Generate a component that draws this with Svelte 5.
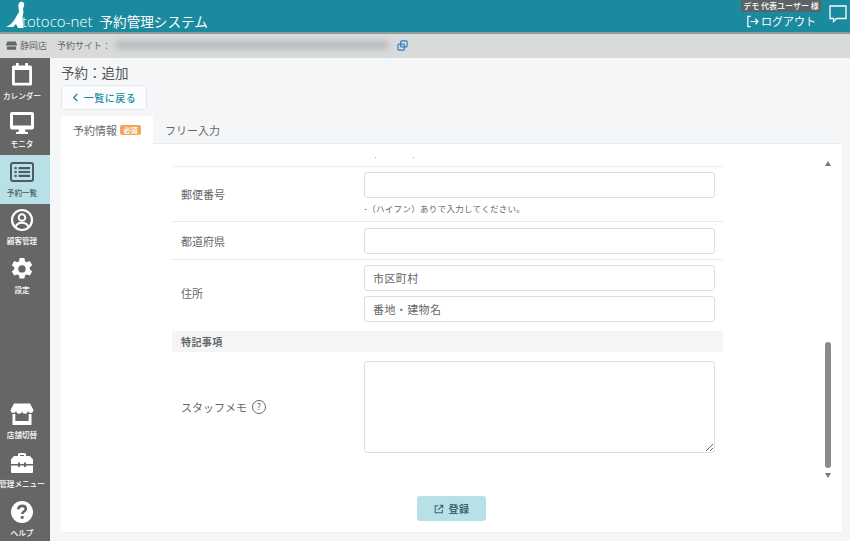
<script lang="ts">
	const navTop = [
		{ id: 'cal', label: 'カレンダー' },
		{ id: 'mon', label: 'モニタ' },
		{ id: 'list', label: '予約一覧', active: true },
		{ id: 'user', label: '顧客管理' },
		{ id: 'gear', label: '設定' }
	];
	const navBottom = [
		{ id: 'shop', label: '店舗切替' },
		{ id: 'tool', label: '管理メニュー' },
		{ id: 'help', label: 'ヘルプ' }
	];
</script>

{#snippet icon(id: string)}
	<svg viewBox="0 0 24 24" width="24" height="24" class="nav-icon">
		{#if id === 'cal'}
			<path d="M3.500 2.500h17a1.500 1.500 0 0 1 1.500 1.500v17a1.500 1.500 0 0 1-1.500 1.500h-17A1.500 1.500 0 0 1 2 21V4a1.500 1.500 0 0 1 1.500-1.500z M4.800 7v12.800h14.400V7z" fill="currentColor" fill-rule="evenodd" />
			<path d="M6 0h2.800v5H6z M15.200 0H18v5h-2.800z" fill="currentColor" />
		{:else if id === 'mon'}
			<path d="M0 3a2 2 0 0 1 2-2h20a2 2 0 0 1 2 2v13.500a2 2 0 0 1-2 2h-7l.6 2.500h2.400v2H6v-2h2.400l.6-2.500H2a2 2 0 0 1-2-2z M3 4v10.500h18V4z" fill="currentColor" fill-rule="evenodd" />
		{:else if id === 'list'}
			<rect x="1" y="3" width="22" height="18" rx="2" fill="none" stroke="currentColor" stroke-width="2" />
			<path d="M4.500 7h2.200v2.200H4.500z M4.500 10.900h2.200v2.200H4.500z M4.500 14.800h2.200V17H4.500z M8.500 7H20v2.200H8.500z M8.500 10.900H20v2.200H8.500z M8.500 14.800H20V17H8.500z" fill="currentColor" />
		{:else if id === 'user'}
			<circle cx="12" cy="12" r="10" fill="none" stroke="currentColor" stroke-width="2.200" />
			<circle cx="12" cy="9.500" r="3.300" fill="none" stroke="currentColor" stroke-width="2" />
			<path d="M5.500 19c1-3 3.500-4.300 6.500-4.300s5.500 1.300 6.500 4.300" fill="none" stroke="currentColor" stroke-width="2" />
		{:else if id === 'gear'}
			<path fill-rule="evenodd" fill="currentColor" d="M9.600 1h4.800l.6 3.200 1.700 1 3.100-1.100 2.400 4.100-2.500 2.100v2l2.500 2.100-2.400 4.100-3.100-1.100-1.700 1-.6 3.200H9.600L9 18.400l-1.700-1-3.100 1.100-2.400-4.100 2.500-2.100v-2L1.800 8.200l2.400-4.100 3.100 1.100 1.700-1z M12 8.200a3.700 3.700 0 1 0 0 7.400 3.700 3.700 0 0 0 0-7.400z" />
		{:else if id === 'shop'}
			<path fill="currentColor" d="M4 1.500h16l3.500 6.500a2.900 2.900 0 0 1-5.700.8 2.900 2.900 0 0 1-5.800 0 2.900 2.900 0 0 1-5.800 0A2.900 2.900 0 0 1 .5 8z" />
			<path fill="currentColor" fill-rule="evenodd" d="M2.500 12h2.800v7h13.400v-7h2.800v11H2.500z" />
		{:else if id === 'tool'}
			<path fill="currentColor" fill-rule="evenodd" d="M8 5V3.500A1.500 1.500 0 0 1 9.500 2h5A1.500 1.500 0 0 1 16 3.500V5h3.500a1.500 1.500 0 0 1 1 .5L23 8.500V13H16v-1.500h-2V13h-4v-1.500H8V13H1V8.500l2.500-3a1.500 1.500 0 0 1 1-.5z M10 4v1h4V4z" />
			<path fill="currentColor" d="M1 14.500h7V16h2v-1.500h4V16h2v-1.500h7V21a1 1 0 0 1-1 1H2a1 1 0 0 1-1-1z" />
		{:else if id === 'help'}
			<circle cx="12" cy="12" r="11" fill="currentColor" />
			<path d="M8.300 9.300c.2-2.200 1.800-3.400 3.800-3.400 2.100 0 3.700 1.200 3.700 3 0 2.600-3.500 2.600-3.500 5" fill="none" stroke="#666" stroke-width="2.600" />
			<rect x="10.800" y="16" width="2.800" height="2.800" fill="#666" />
		{/if}
	</svg>
{/snippet}

<div class="app">
	<header class="topbar">
		<div class="brand">
			<svg class="logo-mark" viewBox="0 0 40 28" width="40" height="28">
				<path fill="#fff" d="M14 1c3-1 5 1 4 4l-1 3 .5 3-1 5 .5 6 .5 5H12l-2-4-3 3H0C5 24 8 20 10 16c1-2 2-3 3-5l-.5-5c-.5-2 0-4 1.500-5z" />
			</svg>
			<span class="logo-text">totoco-net</span>
			<span class="system">予約管理システム</span>
		</div>
		<div class="account">
			<span class="user-chip">デモ 代表ユーザー 様</span>
			<span class="logout">
				<svg viewBox="0 0 14 14" width="13" height="13" fill="none" stroke="#fff" stroke-width="1.300">
					<path d="M5 1.500H2v11h3" />
					<path d="M5 7h8M10 4l3 3-3 3" />
				</svg>
				ログアウト
			</span>
		</div>
		<svg class="chat" viewBox="0 0 18 18" width="18" height="18" fill="none" stroke="#fff" stroke-width="1.300">
			<path d="M1 1h16v12.500H7.500L4.500 16.500v-3H1z" />
		</svg>
	</header>

	<div class="subbar">
		<svg viewBox="0 0 12 12" width="11" height="11" class="store">
			<path fill="#666" d="M1.500 1.500h9L12 5v1H0V5zM1 7h10v3.500H1z" />
		</svg>
		<span class="store-name">静岡店</span>
		<span class="site-label">予約サイト：</span>
		<span class="blurred"></span>
		<svg viewBox="0 0 12 12" width="11" height="11" class="copy" fill="none" stroke="#2f7fc4" stroke-width="1.300">
			<rect x="4" y="1" width="7" height="6.500" rx="1" />
			<rect x="1" y="4.500" width="7" height="6.500" rx="1" />
		</svg>
	</div>

	<div class="body">
		<nav class="sidebar">
			<div class="nav-group">
				{#each navTop as item}
					<div class="nav-item" class:active={item.active}>
						{@render icon(item.id)}
						<span>{item.label}</span>
					</div>
				{/each}
			</div>
			<div class="nav-group low">
				{#each navBottom as item}
					<div class="nav-item">
						{@render icon(item.id)}
						<span>{item.label}</span>
					</div>
				{/each}
			</div>
		</nav>

		<main class="main">
			<h1>予約：追加</h1>
			<button class="back" type="button">
				<svg viewBox="0 0 8 10" width="7" height="9" fill="none" stroke="#1a8a9e" stroke-width="1.500"><path d="M6 1 2 5l4 4" /></svg>
				一覧に戻る
			</button>
			<div class="tabs">
				<div class="tab current">予約情報 <span class="req">必須</span></div>
				<div class="tab">フリー入力</div>
			</div>
			<section class="card">
				<div class="scroll">
					<div class="clipped"><i></i><i></i></div>
					<div class="row zip">
						<div class="label">郵便番号</div>
						<div class="field">
							<input type="text" />
							<p class="hint">-（ハイフン）ありで入力してください。</p>
						</div>
					</div>
					<div class="row pref">
						<div class="label">都道府県</div>
						<div class="field"><input type="text" /></div>
					</div>
					<div class="row addr">
						<div class="label">住所</div>
						<div class="field stack">
							<input type="text" placeholder="市区町村" />
							<input type="text" placeholder="番地・建物名" />
						</div>
					</div>
					<div class="section-head">特記事項</div>
					<div class="row memo">
						<div class="label">
							スタッフメモ
							<span class="q">?</span>
						</div>
						<div class="field"><textarea></textarea></div>
					</div>
					<div class="scrollbar">
						<span class="arrow up"></span>
						<span class="thumb"></span>
						<span class="arrow down"></span>
					</div>
				</div>
				<div class="actions">
					<button class="submit" type="button">
						<svg viewBox="0 0 12 12" width="10" height="10" fill="none" stroke="#3d6670" stroke-width="1.300">
							<path d="M5 2H1.500v8.500H10V7" />
							<path d="M5 7l5-5M7 1.500h3.500V5" />
						</svg>
						登録
					</button>
				</div>
			</section>
		</main>
	</div>
</div>

<style>
	:global(body) {
		margin: 0;
		font-family: 'Noto Sans CJK JP', 'Noto Sans', sans-serif;
	}

	.app {
		width: 850px;
		height: 541px;
		display: flex;
		flex-direction: column;
		overflow: hidden;
		color: #555;
	}

	.topbar {
		height: 32px;
		flex: none;
		background: #1a8a9e;
		border-bottom: 2px solid #8f9a9c;
		display: flex;
		align-items: stretch;
		color: #fff;
	}

	.brand {
		display: flex;
		align-items: center;
		padding: 10px 0 0 5px;
		box-sizing: border-box;
		flex: 1;
		position: relative;
	}

	.logo-mark {
		position: absolute;
		left: 6px;
		top: 1px;
	}

	.logo-text {
		margin-left: 17px;
		font-size: 15px;
		line-height: 22px;
		font-family: 'Open Sans', sans-serif;
		font-weight: 300;
		position: relative;
	}

	.system {
		margin-left: 7px;
		font-size: 13.600px;
		line-height: 22px;
	}

	.account {
		display: flex;
		flex-direction: column;
		align-items: center;
		width: 78px;
		margin-right: 1px;
	}

	.user-chip {
		background: #5c6366;
		font-size: 8px;
		line-height: 12px;
		padding: 0 2px;
		white-space: nowrap;
		font-weight: 500;
	}

	.logout {
		display: flex;
		align-items: center;
		gap: 2px;
		font-size: 11px;
		line-height: 19px;
		white-space: nowrap;
	}

	.chat {
		margin: 5px 3px 0 8px;
	}

	.subbar {
		height: 24px;
		flex: none;
		background: #d9dbdb;
		display: flex;
		align-items: center;
		padding: 0 0 2px 6px;
		box-sizing: border-box;
		font-size: 9px;
		color: #666;
	}

	.store-name {
		margin-left: 3px;
	}

	.site-label {
		margin-left: 10px;
	}

	.blurred {
		width: 272px;
		height: 8px;
		margin-left: 5px;
		background: #b5b8ba;
		filter: blur(3px);
	}

	.copy {
		margin-left: 9px;
	}

	.body {
		flex: 1;
		display: flex;
		min-height: 0;
	}

	.sidebar {
		width: 50px;
		flex: none;
		background: #666;
		display: flex;
		flex-direction: column;
		justify-content: space-between;
		color: #fff;
	}

	.nav-group {
		display: flex;
		flex-direction: column;
	}

	.nav-item {
		height: 48.500px;
		display: flex;
		flex-direction: column;
		align-items: center;
		justify-content: flex-end;
		padding: 0 6px 6px 0;
		box-sizing: border-box;
		font-size: 7.600px;
		line-height: 11px;
		white-space: nowrap;
		gap: 3px;
		font-weight: 500;
	}

	.low .nav-item {
		height: 49px;
		padding-bottom: 3.500px;
	}

	.nav-item.active {
		background: #b7e1e7;
		color: #4d5a60;
	}

	.main {
		flex: 1;
		background: #f4f6f8;
		padding: 0 8px 8px 11px;
		display: flex;
		flex-direction: column;
		min-width: 0;
	}

	h1 {
		margin: 4px 0 0;
		font-size: 13.500px;
		line-height: 20px;
		font-weight: 400;
		color: #555;
	}

	.back {
		align-self: flex-start;
		margin-top: 3px;
		width: 86px;
		height: 25px;
		background: #fbfcfd;
		border: 1px solid #e6e9ec;
		border-radius: 3px;
		color: #1a8a9e;
		font: 500 10px 'Noto Sans CJK JP', sans-serif;
		letter-spacing: 0.5px;
		display: flex;
		align-items: center;
		justify-content: center;
		gap: 5px;
		padding: 0;
	}

	.tabs {
		display: flex;
		margin-top: 6px;
		height: 28px;
		flex: none;
		border-bottom: 1px solid #e8ebee;
		box-sizing: border-box;
	}

	.tab {
		font-size: 11px;
		line-height: 28px;
		padding: 0 12px;
		color: #666;
		white-space: nowrap;
	}

	.tab.current {
		background: #fff;
		height: 28px;
		display: flex;
		align-items: center;
		gap: 3px;
	}

	.req {
		background: #f2a65a;
		color: #fff;
		font-size: 7px;
		line-height: 10px;
		padding: 0 3.500px;
		border-radius: 2px;
		font-weight: 700;
	}

	.card {
		flex: 1;
		background: #fff;
		display: flex;
		flex-direction: column;
		border-bottom: 1px solid #eceff1;
		min-height: 0;
	}

	.scroll {
		height: 340px;
		padding: 0 119px 0 111px;
		position: relative;
		overflow: hidden;
	}

	.clipped {
		height: 23px;
		padding: 12.500px 0 0 203px;
		border-bottom: 1px solid #eceef0;
		box-sizing: border-box;
		display: flex;
		align-items: flex-start;
		gap: 37px;
	}

	.clipped i {
		width: 1px;
		height: 1px;
		background: #aaa;
	}

	.row {
		display: flex;
		align-items: center;
		border-bottom: 1px solid #e8eaec;
		box-sizing: border-box;
	}

	.label {
		width: 192px;
		padding-left: 9px;
		box-sizing: border-box;
		font-size: 11px;
		color: #666;
		display: flex;
		align-items: center;
		gap: 5px;
	}

	.field {
		width: 351px;
		display: flex;
		flex-direction: column;
	}

	.stack {
		gap: 5px;
	}

	input,
	textarea {
		width: 100%;
		box-sizing: border-box;
		border: 1px solid #dcdfe2;
		border-radius: 3px;
		background: #fff;
		padding: 0 8px;
		margin: 0;
		font: 11px 'Noto Sans CJK JP', sans-serif;
		letter-spacing: 0.4px;
		display: block;
	}

	input {
		height: 26px;
	}

	input::placeholder {
		color: #666;
		opacity: 1;
	}

	textarea {
		height: 92px;
	}

	.hint {
		margin: 3px 0 0;
		font-size: 8.500px;
		line-height: 15px;
		color: #666;
		letter-spacing: 0.3px;
	}

	.zip {
		height: 55px;
	}

	.pref {
		height: 38px;
	}

	.addr {
		height: 71px;
		padding-bottom: 5px;
		border: 0;
	}

	.section-head {
		height: 21px;
		background: #f3f5f6;
		padding-left: 9px;
		font-size: 10px;
		line-height: 21px;
		font-weight: 700;
		color: #666;
		letter-spacing: 0.4px;
	}

	.memo {
		height: 110px;
		border: 0;
	}

	.q {
		width: 12px;
		height: 12px;
		border: 1px solid #666;
		border-radius: 50%;
		font-size: 9px;
		line-height: 12px;
		text-align: center;
	}

	.scrollbar {
		position: absolute;
		right: 10px;
		top: 0;
		bottom: 0;
		width: 7px;
	}

	.arrow {
		position: absolute;
		left: 0;
		width: 0;
		height: 0;
		border-left: 3.500px solid transparent;
		border-right: 3.500px solid transparent;
	}

	.arrow.up {
		top: 17px;
		border-bottom: 5px solid #777;
	}

	.arrow.down {
		top: 329px;
		border-top: 5px solid #777;
	}

	.thumb {
		position: absolute;
		left: 0;
		top: 198px;
		width: 6px;
		height: 126px;
		background: #8a8a8a;
		border-radius: 3px;
	}

	.actions {
		flex: 1;
		display: flex;
		justify-content: center;
		padding-top: 12px;
		box-sizing: border-box;
	}

	.submit {
		width: 69px;
		height: 25px;
		background: #b7e1e7;
		border: 0;
		border-radius: 3px;
		color: #3d6670;
		font: 700 10px 'Noto Sans CJK JP', sans-serif;
		letter-spacing: 0.5px;
		display: flex;
		align-items: center;
		justify-content: center;
		gap: 5px;
		padding: 0;
	}
</style>
